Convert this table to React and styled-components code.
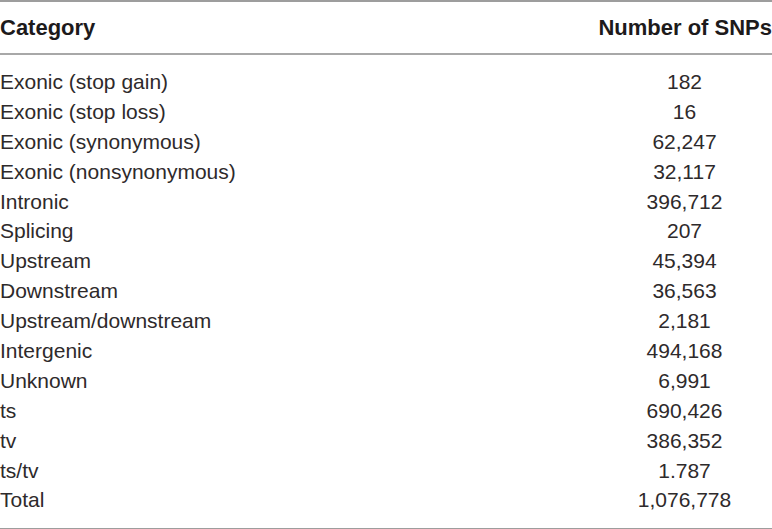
import React from "react";
import styled, { createGlobalStyle } from "styled-components";

const GlobalStyle = createGlobalStyle`
  html, body {
    margin: 0;
    padding: 0;
    background: #fff;
  }
  body {
    font-family: "Liberation Sans", Arial, sans-serif;
    color: #231f20;
  }
`;

const rows = [
  ["Exonic (stop gain)", "182"],
  ["Exonic (stop loss)", "16"],
  ["Exonic (synonymous)", "62,247"],
  ["Exonic (nonsynonymous)", "32,117"],
  ["Intronic", "396,712"],
  ["Splicing", "207"],
  ["Upstream", "45,394"],
  ["Downstream", "36,563"],
  ["Upstream/downstream", "2,181"],
  ["Intergenic", "494,168"],
  ["Unknown", "6,991"],
  ["ts", "690,426"],
  ["tv", "386,352"],
  ["ts/tv", "1.787"],
  ["Total", "1,076,778"],
];

const Table = styled.div`
  width: 772px;
  border-top: 2px solid #9d9d9d;
  border-bottom: 2px solid #9d9d9d;
`;

const Head = styled.div`
  display: grid;
  grid-template-columns: 1fr 175px;
  height: 51px;
  line-height: 51px;
  border-bottom: 2px solid #a8a8a8;
  font-size: 22px;
  font-weight: 700;
  color: #1d1a1b;
`;

const Body = styled.div`
  padding: 12px 0 13px;
`;

const Row = styled.div`
  display: grid;
  grid-template-columns: 1fr 175px;
  height: 29.9px;
  line-height: 29.9px;
  font-size: 21px;
  color: #2e2a2b;
`;

const Cell = styled.div`
  text-align: ${({ align }) => align || "left"};
  white-space: nowrap;
`;

export default function App() {
  return (
    <>
      <GlobalStyle />
      <Table>
        <Head>
          <Cell>Category</Cell>
          <Cell align="right">Number of SNPs</Cell>
        </Head>
        <Body>
          {rows.map(([name, count]) => (
            <Row key={name}>
              <Cell>{name}</Cell>
              <Cell align="center">{count}</Cell>
            </Row>
          ))}
        </Body>
      </Table>
    </>
  );
}
